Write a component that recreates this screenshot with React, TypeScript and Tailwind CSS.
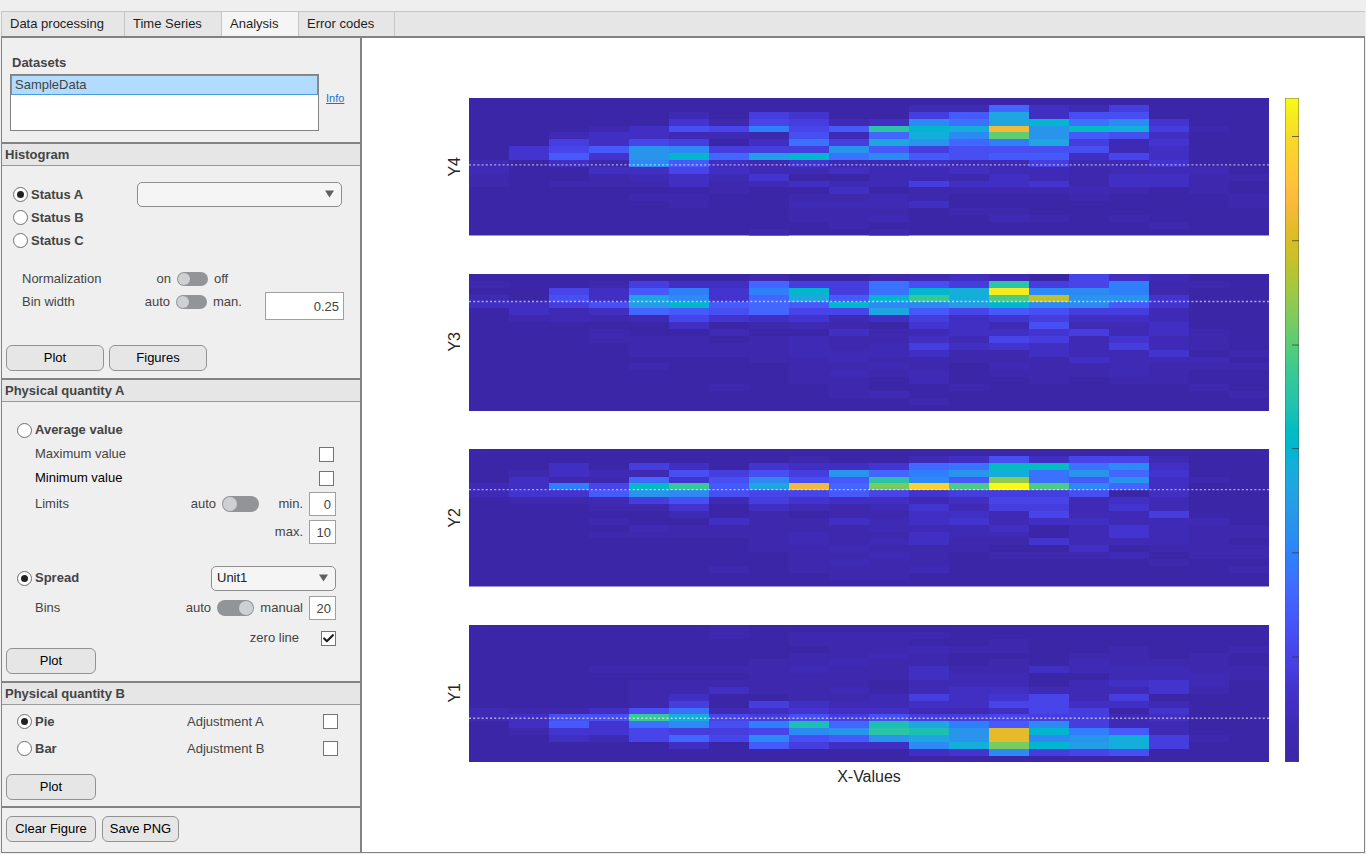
import { useState } from "react";
import type { ReactNode } from "react";
import clsx from "clsx";
import { Check } from "lucide-react";

// Parula colormap, lowest value first. Cells are indexed by one character each.
const LEVELS = ".0123456789abcdefghijklmnopqrstuvwxyz";
const PARULA = [
  "#3c26a8", "#3d28ae", "#3f2ab6", "#412ec3", "#4333cf", "#463ddf", "#4745e9", "#474ff3", "#4659fb",
  "#4266ff", "#3a72ff", "#2f7ffb", "#2d8af4", "#2894ec", "#259de6", "#1fa6e1", "#14aedb", "#02b6d0",
  "#03bcc2", "#1bc0b3", "#2cc4a6", "#37c897", "#4bcb83", "#61cc71", "#7acb5f", "#93c94e", "#abc63b",
  "#c1c22b", "#d5be28", "#e5bb2c", "#f5b939", "#febe3d", "#fec836", "#fbd12e", "#f6dd28", "#f5eb20",
  "#f9fb15",
];

interface Histogram {
  label: string;
  zero: number;
  rows: string[];
}

const HISTOGRAMS: Histogram[] = [
  {
    label: "Y4",
    zero: 48.6,
    rows: [
      "....................",
      "...........118214...",
      ".....1.43..47e266...",
      ".....305412b9eg9b3..",
      "...0265a57jgftchf40.",
      "..122110618fbmc762..",
      "..4254.294ec8ae413..",
      ".357cb444c74666612..",
      ".373cg8dg9b7677252..",
      "1.20b7213112114113..",
      "1..2252112112110111.",
      "0..01213..1102102200",
      "0.00020121142230220.",
      "......0..2.000010.0.",
      "....00..0010...0...0",
      ".....0..1112.......0",
      "........000.00......",
      "........001..10.0...",
      ".........0.......0..",
      ".......0..0.........",
    ],
  },
  {
    label: "Y3",
    zero: 20,
    rows: [
      ".......0..0121.521..",
      "0..0422844964j45a00.",
      "..527a3ag49gfybba0..",
      "1.62eb38e7gkflqcc3..",
      "2246dg787gbbdgbb73..",
      ".212876855e7576441..",
      ".01015323124234221..",
      ".....2.010.3216112..",
      "...0..1..2012234120.",
      "...000.010021541310.",
      "....000010142321410.",
      "....00001112002113.0",
      ".......001000002111.",
      "....0...0010.1001000",
      "........0101.00010..",
      "........00.1..0.00..",
      "......0..0..0.....0.",
      ".........01........0",
      "...........0........",
      "....................",
    ],
  },
  {
    label: "Y2",
    zero: 29.6,
    rows: [
      "....................",
      "........0..1262551..",
      "..2.42.322389hh9b2..",
      ".02116464c8acf9c83..",
      ".200836b67jb7o97c20.",
      "12a5hk7et8nwlzlb82..",
      "1337cb6557534446.2..",
      ".00146143221255121..",
      "...003.21013144131..",
      ".....1.0.002215114..",
      "...0..2002123122111.",
      "....1000001112.13100",
      "...00000100211.13100",
      ".......010120031110.",
      ".......001000..2.000",
      "........0010.0001.00",
      "........0100.....0..",
      "......0.0001.......0",
      ".........00.........",
      "....................",
    ],
  },
  {
    label: "Y1",
    zero: 67.8,
    rows: [
      "......0.............",
      "......0.0000........",
      "........000..0......",
      ".........00100..0..0",
      "........0010...00.0.",
      ".......00100.0.1000.",
      "...00000100200211100",
      ".......0000211..1110",
      "....000000.111.1231.",
      "....002001.12211130.",
      "....02..001423514...",
      "....04.42112255221..",
      "1002691232211254.3..",
      "1266kf546464454412..",
      ".2739b6ai8iea7b411..",
      ".0335445bcjicsga71..",
      "..21585b67cecsbcf40.",
      ".....2.7422bfngdf4..",
      "...........23b456...",
      "....................",
    ],
  },
];

const TABS = [
  { label: "Data processing", width: "w-[123px]" },
  { label: "Time Series", width: "w-[97px]" },
  { label: "Analysis", width: "w-[77px]" },
  { label: "Error codes", width: "w-[96px]" },
];

const TICKS = ["5.8%", "21.5%", "37.2%", "52.8%", "68.5%", "84.2%"];

function Heatmap({ label, zero, rows }: Histogram) {
  return (
    <svg className="block h-full w-full [contain:size]" role="img" aria-label={`${label} histogram`}>
      <svg viewBox="0 0 20 20" preserveAspectRatio="none" width="100%" height="100%" shapeRendering="crispEdges">
        <rect width="20" height="20" fill={PARULA[0]} />
        {rows.map((row, y) =>
          [...row].map((cell, x) =>
            cell === "." ? null : (
              <rect key={`${x}-${y}`} x={x} y={y} width="1" height="1" fill={PARULA[LEVELS.indexOf(cell)]} />
            )
          )
        )}
      </svg>
      <line
        x1="0"
        x2="100%"
        y1={`${zero}%`}
        y2={`${zero}%`}
        stroke="#fff"
        strokeOpacity="0.6"
        strokeWidth="1.3"
        strokeDasharray="2 2.2"
      />
    </svg>
  );
}

function Colorbar() {
  return (
    <svg className="block h-full w-full [contain:size]" role="img" aria-label="Color scale">
      <defs>
        <linearGradient id="parula" x1="0" y1="1" x2="0" y2="0">
          {PARULA.map((color, i) => (
            <stop key={color} offset={i / (PARULA.length - 1)} stopColor={color} />
          ))}
        </linearGradient>
      </defs>
      <rect width="100%" height="100%" fill="url(#parula)" />
      <rect width="100%" height="100%" fill="none" stroke="#555" strokeOpacity="0.8" />
      {TICKS.map((y) => (
        <line key={y} x1="50%" x2="100%" y1={y} y2={y} stroke="#333" strokeOpacity="0.7" />
      ))}
    </svg>
  );
}

function Section({ title, children }: { title: string; children: ReactNode }) {
  return (
    <section className="border-b-2 border-[#838383]">
      <h2 className="h-[22px] border-b border-[#9a9a9a] bg-[#e6e6e6] pl-[3px] font-bold leading-[21px]">{title}</h2>
      {children}
    </section>
  );
}

function PanelButton({ children, className }: { children: ReactNode; className: string }) {
  return (
    <button
      type="button"
      className={clsx("h-[26px] rounded-[6px] border border-[#929292] bg-[#e6e6e6] text-center text-black", className)}
    >
      {children}
    </button>
  );
}

function Radio({ name, label, defaultChecked }: { name: string; label: string; defaultChecked?: boolean }) {
  return (
    <label className="flex items-center gap-[3px] font-bold">
      <input
        type="radio"
        name={name}
        defaultChecked={defaultChecked}
        className="grid size-[15px] appearance-none place-items-center rounded-full border border-[#6e6e6e] bg-white before:size-[7px] before:rounded-full checked:before:bg-[#222]"
      />
      {label}
    </label>
  );
}

function Tickbox({ id, defaultChecked }: { id: string; defaultChecked?: boolean }) {
  return (
    <span className="relative size-[15px]">
      <input
        id={id}
        type="checkbox"
        defaultChecked={defaultChecked}
        className="peer block size-[15px] appearance-none border border-[#747474] bg-white"
      />
      <Check
        className="pointer-events-none absolute inset-0 hidden size-[15px] p-px text-[#1c1c1c] peer-checked:block"
        strokeWidth={4}
        aria-hidden
      />
    </span>
  );
}

function Switch({ label, small, defaultChecked }: { label: string; small?: boolean; defaultChecked?: boolean }) {
  return (
    <input
      type="checkbox"
      role="switch"
      aria-label={label}
      defaultChecked={defaultChecked}
      className={clsx(
        "flex shrink-0 appearance-none items-center rounded-full bg-[#939498] px-px before:rounded-full before:bg-[#cfd0d2] checked:justify-end",
        small ? "h-[14px] w-[31px] before:size-[12px]" : "h-[16px] w-[37px] before:size-[14px]"
      )}
    />
  );
}

function Dropdown({ label, options, className }: { label: string; options: string[]; className: string }) {
  return (
    <span className={clsx("relative h-[25px]", className)}>
      <select
        aria-label={label}
        className="block h-full w-full appearance-none rounded-[5px] border border-[#8e8e8e] bg-[#f5f5f5] pl-[5px] text-[#222]"
      >
        {options.map((option) => (
          <option key={option}>{option}</option>
        ))}
      </select>
      <svg viewBox="0 0 9 8" className="pointer-events-none absolute right-[8px] top-[8px] h-[8px] w-[9px]" aria-hidden>
        <path d="M0 0.5H9L4.5 7.5Z" fill="#606060" />
      </svg>
    </span>
  );
}

function NumberBox({ id, label, value, className }: { id: string; label?: string; value: string; className: string }) {
  return (
    <input
      id={id}
      aria-label={label}
      defaultValue={value}
      className={clsx("border border-[#a0a0a0] bg-white pr-[4px] text-right", className)}
    />
  );
}

function Sidebar() {
  return (
    <aside className="w-[360px] shrink-0 border-r-2 border-[#838383] bg-[#efefef]">
      <div className="flex h-[106px] items-center border-b-2 border-[#838383] pl-2 pt-1">
        <div>
          <h2 id="datasets" className="pl-0.5 font-bold leading-[20px]">Datasets</h2>
          <ul role="listbox" aria-labelledby="datasets" className="mt-px h-[57px] w-[309px] border border-[#838383] bg-white">
            <li role="option" aria-selected className="h-[20px] border border-[#4a9be0] bg-[#b2dcff] pl-[3px] leading-[18px]">
              SampleData
            </li>
          </ul>
        </div>
        <a href="#info" className="ml-[7px] mt-3 text-[11px] text-[#1a6fd0] underline">Info</a>
      </div>

      <Section title="Histogram">
        <div className="pb-[7px] pt-[17px]">
          <div className="flex h-[23px] items-center pl-[11px] pr-[18px]">
            <Radio name="status" label="Status A" defaultChecked />
            <Dropdown label="Status value" options={[""]} className="ml-auto w-[205px]" />
          </div>
          <div className="flex h-[23px] items-center pl-[11px]">
            <Radio name="status" label="Status B" />
          </div>
          <div className="flex h-[23px] items-center pl-[11px]">
            <Radio name="status" label="Status C" />
          </div>

          <div className="mt-[15px] flex justify-between pl-5 pr-4">
            <div>
              <div className="flex h-[23px] items-center gap-[6px]">
                <span className="w-[103px]">Normalization</span>
                <span className="w-[40px] text-right">on</span>
                <Switch label="Normalization" small />
                <span>off</span>
              </div>
              <div className="flex h-[23px] items-center gap-[6px]">
                <span className="w-[102px]">Bin width</span>
                <span className="w-[40px] text-right">auto</span>
                <Switch label="Bin width mode" small />
                <span>man.</span>
              </div>
            </div>
            <NumberBox id="bin-width" label="Bin width" value="0.25" className="mt-[25px] h-[28px] w-[79px]" />
          </div>

          <div className="mt-[25px] flex gap-[5px] pl-1">
            <PanelButton className="w-[98px]">Plot</PanelButton>
            <PanelButton className="w-[98px]">Figures</PanelButton>
          </div>
        </div>
      </Section>

      <Section title="Physical quantity A">
        <div className="pb-[7px] pt-4">
          <div className="flex h-6 items-center pl-[15px]">
            <Radio name="quantity-a" label="Average value" />
          </div>
          <div className="flex h-6 items-center justify-between pl-[33px] pr-[26px]">
            <label htmlFor="maximum">Maximum value</label>
            <Tickbox id="maximum" />
          </div>
          <div className="flex h-6 items-center justify-between pl-[33px] pr-[26px] text-black">
            <label htmlFor="minimum">Minimum value</label>
            <Tickbox id="minimum" />
          </div>
          <div className="flex h-7 items-center gap-[6px] pl-[33px] pr-6">
            <span>Limits</span>
            <span className="ml-auto">auto</span>
            <Switch label="Limits mode" />
            <label htmlFor="min" className="w-[38px] text-right">min.</label>
            <NumberBox id="min" value="0" className="h-6 w-[27px]" />
          </div>
          <div className="flex h-7 items-center justify-end gap-[6px] pr-6">
            <label htmlFor="max">max.</label>
            <NumberBox id="max" value="10" className="h-6 w-[27px]" />
          </div>

          <div className="mt-5 flex h-6 items-center justify-between pl-[15px] pr-6">
            <Radio name="quantity-a" label="Spread" defaultChecked />
            <Dropdown label="Unit" options={["Unit1"]} className="w-[125px]" />
          </div>
          <div className="mt-1 flex h-7 items-center gap-[6px] pl-[33px] pr-6">
            <span>Bins</span>
            <span className="ml-auto">auto</span>
            <Switch label="Bins mode" defaultChecked />
            <label htmlFor="bins" className="w-[43px] text-right">manual</label>
            <NumberBox id="bins" value="20" className="h-6 w-[27px]" />
          </div>
          <div className="mt-[6px] flex h-5 items-center justify-end gap-[22px] pr-6">
            <label htmlFor="zero-line">zero line</label>
            <Tickbox id="zero-line" defaultChecked />
          </div>
          <div className="flex pl-1">
            <PanelButton className="w-[90px]">Plot</PanelButton>
          </div>
        </div>
      </Section>

      <Section title="Physical quantity B">
        <div className="pb-[6px] pt-[3px]">
          <div className="flex h-[27px] items-center pl-[15px] pr-[22px]">
            <Radio name="quantity-b" label="Pie" defaultChecked />
            <label htmlFor="adjustment-a" className="ml-auto w-[136px]">Adjustment A</label>
            <Tickbox id="adjustment-a" />
          </div>
          <div className="flex h-[27px] items-center pl-[15px] pr-[22px]">
            <Radio name="quantity-b" label="Bar" />
            <label htmlFor="adjustment-b" className="ml-auto w-[136px]">Adjustment B</label>
            <Tickbox id="adjustment-b" />
          </div>
          <div className="mt-3 flex pl-1">
            <PanelButton className="w-[90px]">Plot</PanelButton>
          </div>
        </div>
      </Section>

      <div className="flex gap-[6px] pb-2 pl-1 pt-2">
        <PanelButton className="w-[90px]">Clear Figure</PanelButton>
        <PanelButton className="w-[77px]">Save PNG</PanelButton>
      </div>
    </aside>
  );
}

export default function App() {
  const [active, setActive] = useState("Analysis");

  return (
    <div className="flex min-h-screen flex-col bg-[#efefef] px-px pb-px pt-[11px] font-['Liberation_Sans',Arial,sans-serif] text-[13px] leading-[16px] text-[#444]">
      <nav role="tablist" className="flex h-[25px] border-l border-t border-[#c6c6c6] bg-[#e6e6e6]">
        {TABS.map((tab) => (
          <button
            key={tab.label}
            type="button"
            role="tab"
            aria-selected={active === tab.label}
            onClick={() => setActive(tab.label)}
            className={clsx(
              "border-r border-[#c6c6c6] pl-2 text-left text-[#1e1e1e]",
              tab.width,
              active === tab.label ? "bg-[#f5f5f5]" : "bg-[#e6e6e6]"
            )}
          >
            {tab.label}
          </button>
        ))}
      </nav>

      <main className="flex grow border border-t-2 border-[#838383]">
        <Sidebar />
        <figure className="grid min-w-0 grow grid-cols-[24px_minmax(0,1fr)_14px] grid-rows-[minmax(0,1fr)_30px] bg-white pb-[60px] pl-[83px] pr-[65px] pt-[60px] text-[16px] text-[#262626]">
          <div className="flex flex-col gap-[38px]">
            {HISTOGRAMS.map(({ label }) => (
              <div key={label} className="flex flex-1 items-center">
                <span className="rotate-180 leading-[20px] [writing-mode:vertical-rl]">{label}</span>
              </div>
            ))}
          </div>
          <div className="mr-4 flex flex-col gap-[38px]">
            {HISTOGRAMS.map((histogram) => (
              <div key={histogram.label} className="min-h-0 flex-1">
                <Heatmap {...histogram} />
              </div>
            ))}
          </div>
          <Colorbar />
          <figcaption className="col-start-2 mr-4 text-center leading-[30px]">X-Values</figcaption>
        </figure>
      </main>
    </div>
  );
}
